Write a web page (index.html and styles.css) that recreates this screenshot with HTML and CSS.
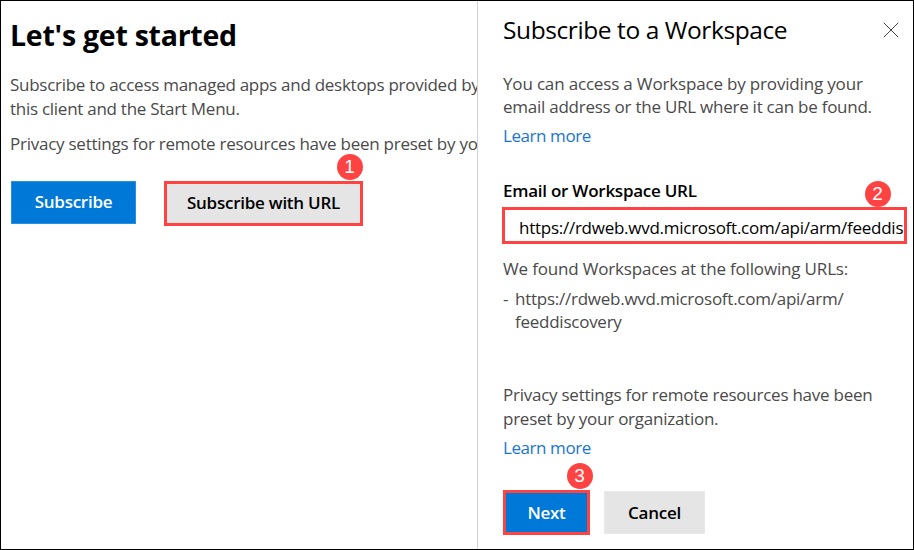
FILE: index.html
```html
<!DOCTYPE html>
<html lang="en">
<head>
<meta charset="utf-8">
<title>Subscribe to a Workspace</title>
<link rel="stylesheet" href="styles.css">
</head>
<body>
<div class="window">
  <main class="start">
    <h1 class="start-title">Let's get started</h1>
    <p class="copy intro">Subscribe to access managed apps and desktops provided by<br>this client and the Start Menu.</p>
    <p class="copy policy">Privacy settings for remote resources have been preset by yo</p>
    <div class="actions">
      <button class="button primary subscribe">Subscribe</button>
      <div class="marked">
        <button class="button marked-button with-url">Subscribe with URL</button>
        <b class="badge badge-one">1</b>
      </div>
    </div>
  </main>
  <aside class="panel">
    <header class="panel-head">
      <h2 class="panel-title">Subscribe to a Workspace</h2>
      <svg class="close" viewBox="0 0 16 16" width="16" height="16"><path d="M.8.8l14.4 14.4M15.2.8L.8 15.2"/></svg>
    </header>
    <p class="copy compact"><span class="wide">You can access a Workspace by providing your</span><br>email address or the URL where it can be found.</p>
    <a class="copy compact link">Learn more</a>
    <label class="copy compact label">Email or Workspace URL</label>
    <div class="marked">
      <div class="field">https://rdweb.wvd.microsoft.com/api/arm/feeddis</div>
      <b class="badge badge-two">2</b>
    </div>
    <p class="copy compact found wide">We found Workspaces at the following URLs:</p>
    <div class="result">
      <span class="copy compact dash">-</span>
      <p class="copy compact">https://rdweb.wvd.microsoft.com/api/arm/<br>feeddiscovery</p>
    </div>
    <p class="copy privacy">Privacy settings for remote resources have been<br>preset by your organization.</p>
    <a class="copy compact link link-privacy">Learn more</a>
    <div class="panel-actions">
      <div class="marked">
        <button class="button primary marked-button next">Next</button>
        <b class="badge badge-three">3</b>
      </div>
      <button class="button cancel">Cancel</button>
    </div>
  </aside>
</div>
</body>
</html>
```

FILE: styles.css
```css
* {
  box-sizing: border-box;
}

body {
  margin: 0;
  font-family: "Open Sans", "Noto Sans", sans-serif;
  background: #fff;
}

h1, h2, p {
  margin: 0;
}

.window {
  display: flex;
  width: 914px;
  height: 550px;
  border: 1px solid #000;
  overflow: hidden;
}

.start {
  width: 476px;
  padding: 14px 0 0 9px;
  overflow: hidden;
  white-space: nowrap;
}

.start-title {
  font-size: 28.5px;
  line-height: 40px;
  font-weight: 700;
  letter-spacing: -0.25px;
  color: #000;
}

.copy {
  font-size: 17px;
  line-height: 24px;
  letter-spacing: -0.25px;
  color: #4a4a4a;
  white-space: nowrap;
}

.compact {
  line-height: 23px;
}

.wide {
  letter-spacing: -0.17px;
}

.intro {
  margin-top: 18px;
  letter-spacing: -0.27px;
}

.policy {
  margin-top: 11px;
}

.actions {
  display: flex;
  gap: 28px;
  margin: 25px 0 0 1px;
}

.button {
  display: block;
  padding: 0;
  border: 1px solid #e9e9e9;
  background: #e5e5e5;
  color: #000;
  font: 600 17px/23px "Open Sans", "Noto Sans", sans-serif;
  letter-spacing: -0.25px;
  white-space: nowrap;
}

.primary {
  border-color: #2b8fe0;
  background: #0078d7;
  color: #fff;
}

.subscribe {
  width: 125px;
  height: 43px;
  padding-bottom: 2px;
}

.marked {
  position: relative;
}

.marked-button {
  border: 3px solid #ff4343;
}

.with-url {
  width: 199px;
  height: 45px;
  padding-bottom: 2px;
}

.badge {
  position: absolute;
  width: 26px;
  height: 26px;
  border-radius: 50%;
  background: #ff4343;
  color: #fff;
  font: 400 19px/26px "Liberation Sans", sans-serif;
  text-align: center;
}

.badge-one {
  left: 172.5px;
  top: -27px;
}

.badge-two {
  left: 361.5px;
  top: -26px;
}

.badge-three {
  left: 63.5px;
  top: -27px;
}

.panel {
  width: 436px;
  padding: 9px 0 0 25px;
  border-left: 1px solid #d2d2d2;
}

.panel-head {
  display: flex;
  justify-content: space-between;
  padding-right: 14px;
  height: 62px;
}

.panel-title {
  font-size: 24.5px;
  line-height: 40px;
  font-weight: 400;
  letter-spacing: -0.41px;
  color: #000;
}

.close {
  margin-top: 12px;
  fill: none;
  stroke: #444;
  stroke-width: 1;
}

.link {
  display: block;
  margin-top: 6px;
  letter-spacing: -0.43px;
  color: #1976d0;
}

.label {
  display: block;
  margin-top: 32px;
  font-weight: 600;
  color: #000;
}

.field {
  width: 405px;
  height: 37px;
  margin: 5px 0 0 -1px;
  padding-left: 14px;
  border: 3px solid #ff4343;
  overflow: hidden;
  font-size: 17px;
  line-height: 35px;
  letter-spacing: -0.26px;
  white-space: nowrap;
}

.found {
  margin-top: 13px;
}

.result {
  display: flex;
  margin-top: 7px;
}

.dash {
  width: 12px;
}

.privacy {
  margin-top: 50px;
}

.link-privacy {
  margin-top: 5px;
}

.panel-actions {
  display: flex;
  gap: 14px;
  margin-top: 31px;
}

.next {
  width: 87px;
  height: 45px;
}

.cancel {
  width: 101px;
  height: 43px;
  margin-top: 1px;
}
```
